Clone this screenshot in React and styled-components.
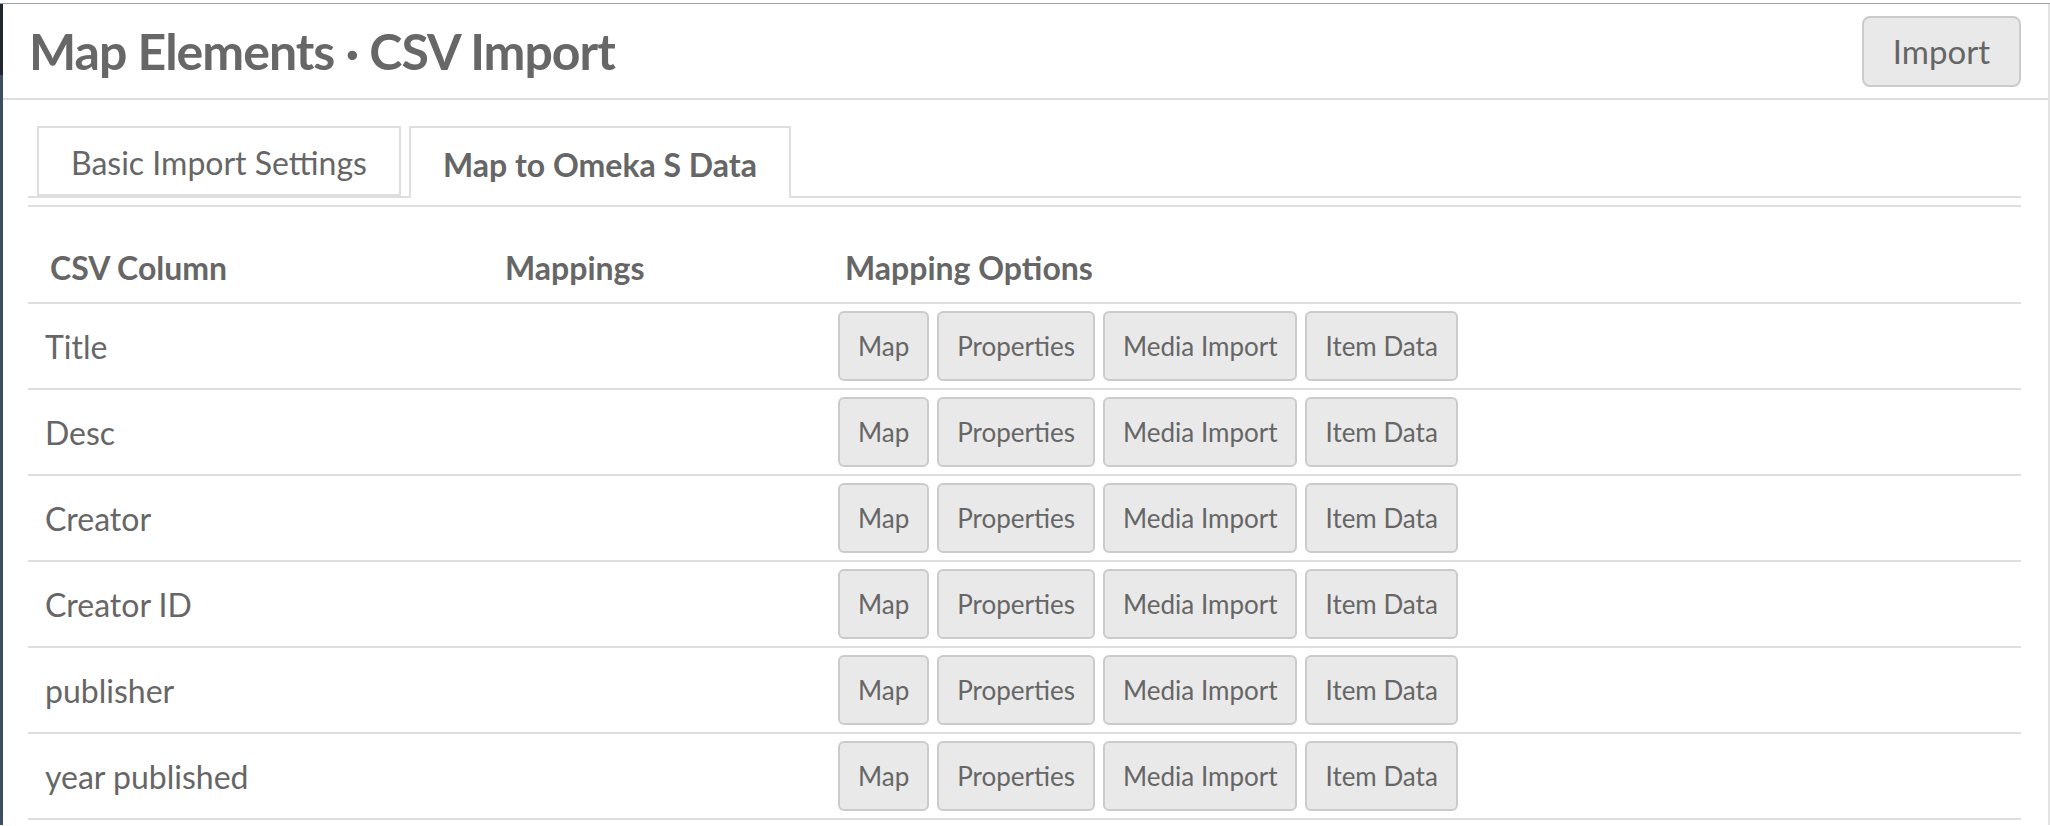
import React from "react";
import styled, { createGlobalStyle } from "styled-components";

const GlobalStyle = createGlobalStyle`
  html, body {
    margin: 0;
    padding: 0;
    background: #fff;
  }
  body {
    font-family: Lato, "Open Sans", "Liberation Sans", sans-serif;
    color: #666;
  }
  * {
    box-sizing: border-box;
  }
`;

const Frame = styled.div`
  margin-top: 3px;
  border-top: 1px solid #a2a2a2;
  display: flex;
  min-height: 822px;
`;

// Thin edge of the admin sidebar on the far left.
const SidebarEdge = styled.div`
  width: 3px;
  flex-shrink: 0;
  background: linear-gradient(#1f2830 0, #1f2830 71px, #3d4e60 71px);
`;

const Main = styled.main`
  flex: 1;
  border-right: 2px solid #e3e3e3;
`;

const Header = styled.header`
  height: 96px;
  display: flex;
  align-items: center;
  justify-content: space-between;
  padding: 0 27px 0 26px;
  border-bottom: 2px solid #dedede;
`;

const Title = styled.h1`
  margin: 0;
  font-size: 50px;
  font-weight: 700;
  color: #676767;
  letter-spacing: -1px;
`;

const Button = styled.button`
  font-family: inherit;
  font-size: ${(props) => props.size || 26}px;
  color: #666;
  background: #e9e9e9;
  border: 2px solid #cbcbcb;
  border-radius: ${(props) => (props.size ? 8 : 6)}px;
  height: ${(props) => (props.size ? 71 : 70)}px;
  padding: 0 ${(props) => (props.size ? 29 : 18)}px;
  cursor: pointer;
  line-height: 1;
`;

const Content = styled.section`
  padding: 0 27px 0 25px;
`;

const TabList = styled.ul`
  list-style: none;
  margin: 26px 0 0;
  padding: 0 0 0 9px;
  display: flex;
  gap: 8px;
  border-bottom: 2px solid #dedede;
`;

const Tab = styled.li`
  display: flex;
  align-items: center;
  padding: 3px 32px 0;
  font-size: 32px;
  font-weight: ${(props) => (props.active ? 700 : 400)};
  color: #666;
  border: 2px solid #dedede;
  border-bottom: ${(props) => (props.active ? "none" : "2px solid #dedede")};
  margin-bottom: ${(props) => (props.active ? "-2px" : "0")};
  height: ${(props) => (props.active ? 72 : 70)}px;
  background: #fff;
`;

const Table = styled.div`
  margin-top: 7px;
  border-top: 2px solid #dedede;
`;

const Row = styled.div`
  display: grid;
  grid-template-columns: 455px 338px 1fr;
  align-items: ${(props) => (props.head ? "end" : "center")};
  height: ${(props) => (props.head ? 97 : 86)}px;
  border-bottom: 2px solid #dedede;
  padding-bottom: ${(props) => (props.head ? 15 : 0)}px;
`;

const HeadCell = styled.div`
  font-size: 32px;
  font-weight: 700;
  color: #666;
  padding-left: ${(props) => props.pad || 22}px;
`;

const Cell = styled.div`
  font-size: 32px;
  color: #666;
  padding-left: 17px;
`;

const ButtonGroup = styled.div`
  display: flex;
  gap: 8px;
  padding-left: 17px;
`;

const columns = [
  "Title",
  "Desc",
  "Creator",
  "Creator ID",
  "publisher",
  "year published",
];

const options = ["Map", "Properties", "Media Import", "Item Data"];

const App = () => {
  return (
    <>
      <GlobalStyle />
      <Frame>
        <SidebarEdge />
        <Main>
          <Header>
            <Title>Map Elements · CSV Import</Title>
            <Button size={33}>Import</Button>
          </Header>
          <Content>
            <TabList>
              <Tab>Basic Import Settings</Tab>
              <Tab active>Map to Omeka S Data</Tab>
            </TabList>
            <Table>
              <Row head>
                <HeadCell>CSV Column</HeadCell>
                <HeadCell>Mappings</HeadCell>
                <HeadCell pad={24}>Mapping Options</HeadCell>
              </Row>
              {columns.map((name) => (
                <Row key={name}>
                  <Cell>{name}</Cell>
                  <Cell />
                  <ButtonGroup>
                    {options.map((opt) => (
                      <Button key={opt}>{opt}</Button>
                    ))}
                  </ButtonGroup>
                </Row>
              ))}
            </Table>
          </Content>
        </Main>
      </Frame>
    </>
  );
};

export default App;
